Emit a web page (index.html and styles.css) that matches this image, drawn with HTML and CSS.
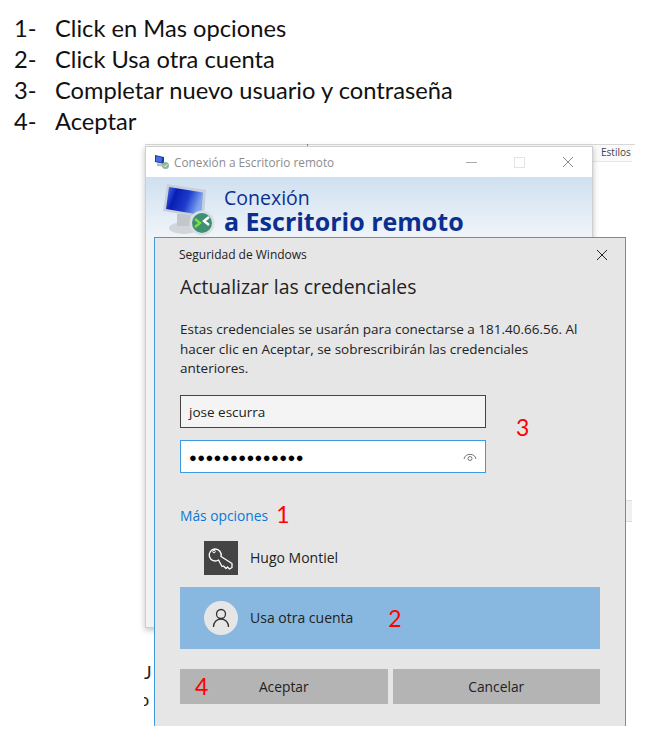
FILE: index.html
```html
<!DOCTYPE html>
<html lang="es">
<head>
  <meta charset="UTF-8" />
  <title>Pasos para cambiar de usuario</title>
  <link rel="stylesheet" href="styles.css">
</head>
<body>

  <!-- Steps -->
  <ol class="steps">
    <li><span class="num">1-</span>Click en Mas opciones</li>
    <li><span class="num">2-</span>Click Usa otra cuenta</li>
    <li><span class="num">3-</span>Completar nuevo usuario y contraseña</li>
    <li><span class="num">4-</span>Aceptar</li>
  </ol>

  <!-- Screenshot area -->
  <div class="desktop">
    <div class="doc-line"></div>
    <div class="doc-tick"></div>
    <div class="doc-styles">Estilos</div>
    <div class="doc-scroll"></div>
    <div class="doc-letter doc-j">J</div>
    <div class="doc-letter doc-o">o</div>

    <!-- Back window -->
    <div class="rdp-window">
      <div class="rdp-title">
        <svg class="rdp-small" width="16" height="16" viewBox="0 0 16 16">
          <path d="M1 1l9 2v7l-9-2z" fill="#1d3f9e"/>
          <path d="M2 2.200l6 1.300-.5 5-5.500-1.200z" fill="#3f6fe0"/>
          <path d="M3 9l6 1.500v2L3 12z" fill="#b8bcc4"/>
          <circle cx="11.500" cy="11.500" r="3.500" fill="#8fb59a"/>
          <path d="M10 11.500l1.200 1.200 2-2.200" stroke="#fff" fill="none"/>
        </svg>
        <span class="rdp-name">Conexión a Escritorio remoto</span>
        <div class="rdp-controls">
          <span class="ctl-min"></span>
          <span class="ctl-max"></span>
          <svg width="12" height="12" viewBox="0 0 12 12"><path d="M1 1l10 10M11 1L1 11" stroke="#8a8a8a" fill="none"/></svg>
        </div>
      </div>
      <div class="rdp-banner">
        <svg class="rdp-logo" width="52" height="52" viewBox="0 0 52 52">
          <defs>
            <linearGradient id="screen" x1="0" y1="0" x2="1" y2="0.300">
              <stop offset="0" stop-color="#4f7ff0"/>
              <stop offset="0.300" stop-color="#0a1db4"/>
              <stop offset="0.650" stop-color="#1c3ccc"/>
              <stop offset="1" stop-color="#7fa4f0"/>
            </linearGradient>
          </defs>
          <ellipse cx="21" cy="44" rx="15" ry="6" fill="#d2d6da"/>
          <path d="M14 30h14v12H14z" fill="#c2c7cc"/>
          <path d="M4 0l39 6-2 28L0 27z" fill="#c9d0da"/>
          <path d="M6 3l34 5.500-1.800 22.500L3 25z" fill="url(#screen)"/>
          <circle cx="39" cy="39" r="12.500" fill="#d9dfe3"/>
          <circle cx="39" cy="39" r="10" fill="#3f8f74"/>
          <path d="M32 35l5 4-5 4" stroke="#7de03c" stroke-width="2.400" fill="none"/>
          <path d="M46 33l-5 4 5 4" stroke="#fff" stroke-width="2.400" fill="none"/>
        </svg>
        <div class="rdp-heading">
          <div class="rdp-line1">Conexión</div>
          <div class="rdp-line2">a Escritorio remoto</div>
        </div>
      </div>
    </div>

    <!-- Dialog -->
    <div class="dialog">
      <div class="dialog-top">
        <span>Seguridad de Windows</span>
        <svg class="dialog-close" width="12" height="12" viewBox="0 0 12 12"><path d="M1 1l10 10M11 1L1 11" stroke="#222" fill="none"/></svg>
      </div>
      <h2>Actualizar las credenciales</h2>
      <p>Estas credenciales se usarán para conectarse a 181.40.66.56. Al hacer clic en Aceptar, se sobrescribirán las credenciales anteriores.</p>

      <div class="field-row">
        <div class="fields">
          <div class="field">jose escurra</div>
          <div class="field field-active">
            <span class="dots">●●●●●●●●●●●●●●</span>
            <svg width="14" height="10" viewBox="0 0 14 10"><path d="M1 7a6.200 6.200 0 0 1 12 0" stroke="#777" fill="none"/><circle cx="7" cy="6.500" r="2" stroke="#777" fill="none"/></svg>
          </div>
        </div>
        <span class="mark mark-3">3</span>
      </div>

      <div class="more"><span class="more-link">Más opciones</span><span class="mark mark-1">1</span></div>

      <div class="account account-key">
        <span class="account-icon key">
          <svg width="34" height="34" viewBox="0 0 34 34"><path d="M17 15.500L28 22.500v4L25.500 28l-2-2-1.500 1.500-2.500-2.500-1.500.5-3.500-6.500A6 6 0 1 1 17 15.500z" fill="none" stroke="#fff" stroke-width="1.300" stroke-linejoin="round"/><circle cx="10" cy="10.500" r="1.300" fill="none" stroke="#fff"/></svg>
        </span>
        <span>Hugo Montiel</span>
      </div>
      <div class="account account-on">
        <span class="account-icon avatar">
          <svg width="18" height="20" viewBox="0 0 18 20"><circle cx="9" cy="6" r="4.500" fill="none" stroke="#333" stroke-width="1.300"/><path d="M1.500 19c0-4.500 3-8 7.500-8s7.500 3.500 7.500 8" fill="none" stroke="#333" stroke-width="1.300"/></svg>
        </span>
        <span>Usa otra cuenta</span>
        <span class="mark mark-2">2</span>
      </div>

      <div class="buttons">
        <div class="btn"><span class="mark mark-4">4</span>Aceptar</div>
        <div class="btn">Cancelar</div>
      </div>
    </div>
  </div>

</body>
</html>
```

FILE: styles.css
```css
* {
  margin: 0;
  padding: 0;
  box-sizing: border-box;
}

html,
body {
  height: 750px;
  overflow: hidden;
}

body {
  background: #fff;
  color: #111;
  font-family: 'Open Sans', sans-serif;
}

.steps {
  list-style: none;
  padding: 13px 0 0 14px;
  font-family: 'Lato', sans-serif;
  font-size: 23.700px;
  line-height: 31px;
  color: #111;
}

.steps li {
  display: flex;
}

.num {
  width: 41px;
}

/* Windows sit on a free canvas */
.desktop {
  position: absolute;
  top: 0;
  left: 0;
  width: 667px;
  height: 750px;
}

.doc-line {
  position: absolute;
  left: 145px;
  top: 144px;
  width: 490px;
  height: 1px;
  background: #d8d8d8;
}

.doc-tick {
  position: absolute;
  left: 307px;
  top: 144px;
  width: 1px;
  height: 3px;
  background: #888;
}

.doc-styles {
  position: absolute;
  left: 593px;
  top: 145px;
  width: 39px;
  height: 17px;
  padding-left: 8px;
  overflow: hidden;
  font-size: 10px;
  line-height: 15px;
  color: #444;
  background: #fafafa;
  border-bottom: 1px solid #e6e6e6;
}

.doc-scroll {
  position: absolute;
  left: 625px;
  top: 500px;
  width: 7px;
  height: 22px;
  background: #f0f0f0;
  border-top: 1px solid #dcdcdc;
  border-bottom: 1px solid #dcdcdc;
}

.doc-letter {
  position: absolute;
  left: 144px;
  width: 10px;
  overflow: hidden;
  font-family: 'Lato', sans-serif;
  font-size: 18px;
  line-height: 22px;
  color: #222;
}

.doc-j { top: 661px; }
.doc-o { top: 688px; text-indent: -5px; }

.rdp-window {
  position: absolute;
  left: 145px;
  top: 146px;
  width: 448px;
  height: 482px;
  background: #f2f2f2;
  border: 1px solid #cfcfcf;
  box-shadow: 0 2px 6px rgba(0, 0, 0, 0.25);
}

.rdp-title {
  display: flex;
  align-items: center;
  height: 30px;
  padding: 0 18px 0 8px;
  background: #fff;
}

.rdp-small {
  margin-right: 4px;
}

.rdp-name {
  font-size: 11.800px;
  color: #8c8c8c;
}

.rdp-controls {
  display: flex;
  align-items: center;
  gap: 37px;
  margin-left: auto;
}

.ctl-min {
  width: 11px;
  height: 1px;
  background: #aaa;
}

.ctl-max {
  width: 11px;
  height: 11px;
  border: 1px solid #e4e4e4;
}

.rdp-banner {
  display: flex;
  height: 60px;
  padding: 7px 0 0 17px;
  background: linear-gradient(#cfe0f0, #f0f4f9);
}

.rdp-heading {
  margin: 2px 0 0 9px;
  color: #0b2f8f;
}

.rdp-line1 {
  font-size: 19.500px;
  line-height: 23px;
}

.rdp-line2 {
  font-size: 25px;
  line-height: 24px;
  font-weight: 700;
}

.dialog {
  position: absolute;
  left: 154px;
  top: 237px;
  width: 472px;
  height: 489px;
  padding: 0 25px;
  background: #e6e6e6;
  border: 1px solid #3f9ae0;
  border-bottom: none;
  color: #222;
}

.dialog-top {
  display: flex;
  justify-content: space-between;
  align-items: center;
  height: 33px;
  margin-left: -1px;
  font-size: 12px;
}

.dialog-close {
  margin-right: -8px;
}

.dialog h2 {
  margin: 3px 0 0 0;
  font-size: 19.400px;
  line-height: 26px;
  font-weight: 400;
}

.dialog p {
  width: 400px;
  margin-top: 20px;
  font-size: 13.500px;
  line-height: 19.500px;
}

.field-row {
  display: flex;
  align-items: center;
  margin-top: 16px;
}

.fields {
  display: flex;
  flex-direction: column;
  gap: 12px;
  width: 306px;
}

.field {
  display: flex;
  justify-content: space-between;
  align-items: center;
  height: 33px;
  padding: 1px 8px 0;
  background: #f4f4f4;
  border: 1px solid #444;
  font-size: 13.500px;
}

.field-active {
  background: #fff;
  border-color: #3f9ae0;
}

.dots {
  font-size: 13px;
  letter-spacing: 0.350px;
  color: #000;
}

.mark {
  font-family: 'Lato', sans-serif;
  font-size: 23px;
  color: #f00;
}

.mark-3 {
  margin: 0 0 14px 30px;
}

.mark-1 {
  margin-bottom: 4px;
}

.more {
  display: flex;
  align-items: center;
  gap: 8px;
  height: 22px;
  margin: 32px 0 2px;
}

.more-link {
  font-size: 13.800px;
  color: #0a78d4;
}

.account {
  display: flex;
  align-items: center;
  gap: 12px;
  height: 62px;
  padding-left: 24px;
  font-size: 14px;
}

.account-key {
  height: 58px;
}

.account-on {
  background: #88b8e0;
}

.account-icon {
  display: flex;
  align-items: center;
  justify-content: center;
  width: 34px;
  height: 34px;
}

.key {
  background: #444;
}

.avatar {
  background: #e6e6e6;
  border-radius: 50%;
}

.mark-2 {
  margin-left: 23px;
}

.buttons {
  display: flex;
  gap: 5px;
  margin-top: 20px;
}

.btn {
  flex: 1;
  position: relative;
  height: 35px;
  line-height: 35px;
  text-align: center;
  background: #b4b4b4;
  font-size: 13.800px;
}

.mark-4 {
  position: absolute;
  left: 15px;
  top: 0;
}
```
